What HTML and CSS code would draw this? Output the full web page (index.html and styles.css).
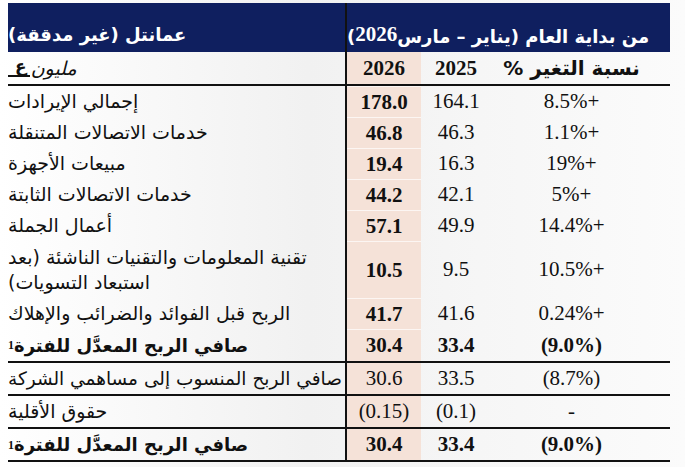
FILE: index.html
```html
<!DOCTYPE html>
<html lang="ar">
<head>
<meta charset="utf-8">
<link rel="stylesheet" href="styles.css">
</head>
<body>
<div class="sheet">
  <div class="row head">
    <div class="lab" dir="rtl">عمانتل (غير مدققة)</div>
    <div class="span3" dir="rtl">من بداية العام (يناير – مارس <span class="num">2026</span>)</div>
  </div>
  <div class="row units line">
    <div class="lab" dir="rtl"><span class="unit">مليون</span><span class="rial">ع</span></div>
    <div class="c1 b">2026</div>
    <div class="c2 b">2025</div>
    <div class="c3 ar b" dir="rtl">نسبة التغير %</div>
  </div>
  <div class="row">
    <div class="lab" dir="rtl">إجمالي الإيرادات</div>
    <div class="c1 b">178.0</div><div class="c2">164.1</div><div class="c3">8.5%+</div>
  </div>
  <div class="row">
    <div class="lab" dir="rtl">خدمات الاتصالات المتنقلة</div>
    <div class="c1 b">46.8</div><div class="c2">46.3</div><div class="c3">1.1%+</div>
  </div>
  <div class="row">
    <div class="lab" dir="rtl">مبيعات الأجهزة</div>
    <div class="c1 b">19.4</div><div class="c2">16.3</div><div class="c3">19%+</div>
  </div>
  <div class="row">
    <div class="lab" dir="rtl">خدمات الاتصالات الثابتة</div>
    <div class="c1 b">44.2</div><div class="c2">42.1</div><div class="c3">5%+</div>
  </div>
  <div class="row">
    <div class="lab" dir="rtl">أعمال الجملة</div>
    <div class="c1 b">57.1</div><div class="c2">49.9</div><div class="c3">14.4%+</div>
  </div>
  <div class="row tall">
    <div class="lab" dir="rtl">تقنية المعلومات والتقنيات الناشئة (بعد<br>استبعاد التسويات)</div>
    <div class="c1 b">10.5</div><div class="c2">9.5</div><div class="c3">10.5%+</div>
  </div>
  <div class="row">
    <div class="lab" dir="rtl">الربح قبل الفوائد والضرائب والإهلاك</div>
    <div class="c1 b">41.7</div><div class="c2">41.6</div><div class="c3">0.24%+</div>
  </div>
  <div class="row line last">
    <div class="lab b tot" dir="rtl">صافي الربح المعدَّل للفترة<sup>1</sup></div>
    <div class="c1 b">30.4</div><div class="c2 b">33.4</div><div class="c3 b">(9.0%)</div>
  </div>
  <div class="row line sec">
    <div class="lab long" dir="rtl">صافي الربح المنسوب إلى مساهمي الشركة</div>
    <div class="c1">30.6</div><div class="c2">33.5</div><div class="c3">(8.7%)</div>
  </div>
  <div class="row line sec">
    <div class="lab" dir="rtl">حقوق الأقلية</div>
    <div class="c1">(0.15)</div><div class="c2">(0.1)</div><div class="c3">-</div>
  </div>
  <div class="row line sec">
    <div class="lab b tot" dir="rtl">صافي الربح المعدَّل للفترة<sup>1</sup></div>
    <div class="c1 b">30.4</div><div class="c2 b">33.4</div><div class="c3 b">(9.0%)</div>
  </div>
</div>
</body>
</html>
```
FILE: styles.css
```css
html, body {
  margin: 0;
  padding: 0;
}
body {
  width: 685px;
  height: 467px;
  overflow: hidden;
  background: linear-gradient(to right, #ffffff 0%, #f1f1f1 45%, #f6f6f6 70%, #fbfbfb 100%);
  font-family: "DejaVu Sans", sans-serif;
  color: #111;
}
.sheet {
  margin: 3px 0 0 8px;
  width: 662px;
}
.row {
  display: grid;
  grid-template-columns: 339px 74px 70px 179px;
  height: 31px;
}
.row > div {
  display: flex;
  align-items: center;
}
.lab {
  border-right: 2px solid #111;
  font-size: 19px;
  justify-content: flex-end;
  text-align: left;
  line-height: 25px;
  white-space: nowrap;
  padding-right: 2px;
}
.long {
  font-size: 18.5px;
  padding-right: 0;
}
.tot {
  font-size: 18px;
}
.c1, .c2, .c3 {
  font-family: "Liberation Serif", "Times New Roman", serif;
  font-size: 21px;
  justify-content: center;
}
.c1 {
  background: #f5e2d8;
  border-top: 1px solid rgba(255,255,255,0.7);
}
.c3 {
  padding-right: 18px;
}
.b { font-weight: bold; }
.ar {
  font-family: "DejaVu Sans", sans-serif;
  font-size: 20px;
}
.head {
  height: 49px;
  grid-template-columns: 339px 323px;
  background: #0f1f5f;
  color: #fff;
}
.head > div {
  align-items: flex-end;
  padding-bottom: 5px;
  font-weight: bold;
  font-size: 18px;
  white-space: nowrap;
}
.head .lab { border-right-color: #111; }
.head .span3 {
  justify-content: flex-end;
  padding-right: 2px;
}
.num {
  font-family: "Liberation Serif", serif;
  font-size: 21px;
}
.units {
  height: 32px;
}
.units .c1 { border-top: 0; }
.line {
  border-bottom: 2px solid #111;
}
.unit {
  font-style: italic;
  font-size: 19px;
}
.rial {
  display: inline-block;
  font-weight: bold;
  font-size: 17px;
  line-height: 13px;
  border-bottom: 2px solid #111;
  padding: 0 3px 2px 7px;
  margin-right: 1px;
}
.tall {
  height: 57px;
}
.last { height: 32px; }
.sec .c1 { border-top: 0; }
sup {
  font-family: "Liberation Serif", serif;
  font-size: 12px;
  font-weight: bold;
  vertical-align: 8px;
  line-height: 0;
}
```
